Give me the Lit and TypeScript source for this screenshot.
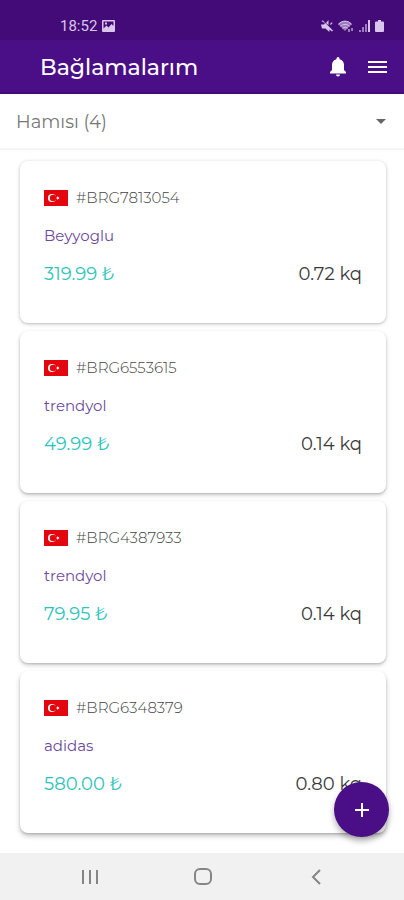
import { LitElement, html, css } from "lit";
import { customElement, property, state } from "lit/decorators.js";

interface Parcel {
  code: string;
  shop: string;
  price: string;
  weight: string;
}

const parcels: Parcel[] = [
  { code: "#BRG7813054", shop: "Beyyoglu", price: "319.99 ₺", weight: "0.72 kq" },
  { code: "#BRG6553615", shop: "trendyol", price: "49.99 ₺", weight: "0.14 kq" },
  { code: "#BRG4387933", shop: "trendyol", price: "79.95 ₺", weight: "0.14 kq" },
  { code: "#BRG6348379", shop: "adidas", price: "580.00 ₺", weight: "0.80 kq" },
];

@customElement("status-bar")
class StatusBar extends LitElement {
  static styles = css`
    :host {
      display: flex;
      justify-content: space-between;
      align-items: center;
      height: 40px;
      padding: 12px 20px 0 60px;
      box-sizing: border-box;
      background: #430b77;
      color: #d9c6ea;
      font: 15px/20px Roboto, sans-serif;
    }
    .group {
      display: flex;
      align-items: center;
      gap: 5px;
    }
    svg {
      display: block;
      fill: currentColor;
    }
    .dim {
      opacity: 0.6;
    }
  `;

  render() {
    return html`
      <div class="group">
        <span>18:52</span>
        <svg width="13" height="12" viewBox="0 0 13 12" aria-hidden="true">
          <path fill-rule="evenodd" d="M1 0h11a1 1 0 0 1 1 1v10a1 1 0 0 1-1 1H1a1 1 0 0 1-1-1V1a1 1 0 0 1 1-1zM1.500 1.500v7l3-3 2 2 3-3.500 2 2V1.500zM3 2.500h2v2H3z" />
        </svg>
      </div>
      <div class="group">
        <svg width="12" height="12" viewBox="0 0 12 12" aria-hidden="true">
          <path d="M0 4.500h3l1-1.500L.600 1.300l1-1L12 10.500l-1 1-2.600-2V12L4.500 8.500H1zM5 3l2.500-3v5zM9 4l1.800-1.800.8.800L9.800 5z" />
        </svg>
        <svg width="16" height="12" viewBox="0 0 16 12" aria-hidden="true">
          <path class="dim" d="M0 4C4-.500 10-.500 14 4L7 11z" />
          <path fill="none" stroke="currentColor" d="M.500 4.200c4-4 9-4 13 0M2.500 6.300c3-2.600 6-2.600 9 0M4.500 8.300c2-1.500 3-1.500 5 0" />
          <path class="dim" d="M10 9h2v3h-2zM13 8h2v3h-2z" />
        </svg>
        <svg width="11" height="12" viewBox="0 0 11 12" aria-hidden="true">
          <path class="dim" d="M0 10h2v2H0zM3 7h2v5H3zM6 4h2v8H6z" />
          <path d="M9 0h2v12H9z" />
        </svg>
        <svg width="9" height="12" viewBox="0 0 9 12" aria-hidden="true">
          <path d="M3 0h3v1.500h2a1 1 0 0 1 1 1V11a1 1 0 0 1-1 1H1a1 1 0 0 1-1-1V2.500a1 1 0 0 1 1-1h2z" />
        </svg>
      </div>
    `;
  }
}

@customElement("parcel-card")
class ParcelCard extends LitElement {
  @property({ attribute: false }) parcel!: Parcel;

  static styles = css`
    :host {
      display: flex;
      flex-direction: column;
      gap: 12px;
      padding: 24px 24px 36px;
      border-radius: 8px;
      background: #fff;
      line-height: 26px;
      box-shadow: 0 1px 4px rgba(0, 0, 0, 0.2), 0 1px 2px rgba(0, 0, 0, 0.1);
    }
    .row {
      display: flex;
      align-items: center;
      gap: 8px;
    }
    .between {
      justify-content: space-between;
    }
    .flag {
      display: block;
    }
    .code,
    .shop {
      font-size: 15px;
    }
    .code {
      font-weight: 300;
      color: #444;
    }
    .shop {
      color: #6d4a9c;
    }
    .price,
    .weight {
      font-size: 18px;
    }
    .price {
      color: #2cc4bb;
    }
    .weight {
      color: #3a3a3a;
    }
  `;

  render() {
    const p = this.parcel;
    return html`
      <div class="row">
        <svg class="flag" width="24" height="16" viewBox="0 0 24 16" role="img" aria-label="Türkiyə">
          <rect width="24" height="16" fill="#e3060f" />
          <circle cx="8" cy="8" r="4" fill="#fff" />
          <circle cx="9" cy="8" r="3.200" fill="#e3060f" />
          <path fill="#fff" d="M11.600 8l1.400-.5.1-1.500.9 1.200 1.500-.4-.9 1.200.9 1.200-1.500-.4-.9 1.200-.1-1.500z" />
        </svg>
        <span class="code">${p.code}</span>
      </div>
      <div class="row shop">${p.shop}</div>
      <div class="row between">
        <span class="price">${p.price}</span>
        <span class="weight">${p.weight}</span>
      </div>
    `;
  }
}

@customElement("app-root")
class AppRoot extends LitElement {
  @state() private items = parcels;

  static styles = css`
    :host {
      display: flex;
      flex-direction: column;
      min-height: 100vh;
      background: #fff;
      font-family: Montserrat, Inter, sans-serif;
    }
    button {
      display: grid;
      place-items: center;
      padding: 0;
      border: 0;
      background: none;
      color: inherit;
      cursor: pointer;
    }
    svg {
      display: block;
    }
    .bar {
      display: flex;
      align-items: center;
      height: 54px;
      padding: 2px 17px 0 40px;
      box-sizing: border-box;
      border-bottom: 2px solid #430b77;
      background: #4a0e87;
      color: #fff;
    }
    h1 {
      flex: 1;
      margin: 0;
      padding-top: 2px;
      font-size: 22px;
      line-height: 28px;
      font-weight: 500;
    }
    .actions {
      display: flex;
      gap: 21px;
    }
    .filter {
      display: grid;
      align-items: center;
      height: 56px;
      border-bottom: 2px solid #f5f5f5;
      box-sizing: border-box;
    }
    .filter > * {
      grid-area: 1 / 1;
    }
    .filter select {
      appearance: none;
      width: 100%;
      height: 100%;
      padding: 2px 40px 0 16px;
      border: 0;
      background: none;
      color: #777;
      font: 18px/24px Montserrat, Inter, sans-serif;
    }
    .filter svg {
      justify-self: end;
      margin-right: 18px;
      pointer-events: none;
    }
    main {
      flex: 1;
      position: relative;
      display: flex;
      flex-direction: column;
      gap: 8px;
      padding: 11px 18px 18px 20px;
    }
    parcel-card:nth-of-type(n + 2) {
      box-shadow: 0 2px 4px rgba(0, 0, 0, 0.22), 0 1px 2px rgba(0, 0, 0, 0.12);
    }
    parcel-card:nth-of-type(n + 4) {
      box-shadow: 0 3px 5px rgba(0, 0, 0, 0.24), 0 1px 2px rgba(0, 0, 0, 0.14);
    }
    .add {
      position: absolute;
      right: 15px;
      bottom: 16px;
      width: 55px;
      height: 55px;
      border-radius: 50%;
      background: #4a0e87;
      color: #fff;
      box-shadow: 0 4px 6px rgba(0, 0, 0, 0.3);
    }
    nav {
      display: flex;
      justify-content: center;
      gap: 89px;
      height: 47px;
      padding-left: 2px;
      background: #f1f1f1;
      color: #858585;
    }
    nav button {
      width: 24px;
    }
  `;

  render() {
    return html`
      <status-bar></status-bar>
      <header class="bar">
        <h1>Bağlamalarım</h1>
        <div class="actions">
          <button aria-label="Bildirişlər">
            <svg width="18" height="20" viewBox="0 0 18 20" fill="#fff">
              <path d="M7.500 1.500a1.500 1.500 0 0 1 3 0v.8c2.900.7 4.500 2.900 4.500 5.700v5l2 2v1.500H1V15l2-2V8c0-2.800 1.600-5 4.500-5.700zM7 17.500h4a2 2 0 0 1-4 0z" />
            </svg>
          </button>
          <button aria-label="Menyu">
            <svg width="19" height="14" viewBox="0 0 19 14" fill="#fff">
              <path d="M0 1h19v2H0zM0 6h19v2H0zM0 11h19v2H0z" />
            </svg>
          </button>
        </div>
      </header>
      <div class="filter">
        <select aria-label="Filtr">
          <option>Hamısı (${this.items.length})</option>
        </select>
        <svg width="10" height="5" viewBox="0 0 10 5" fill="#666" aria-hidden="true">
          <path d="M0 0h10L5 5z" />
        </svg>
      </div>
      <main>
        ${this.items.map((p) => html`<parcel-card .parcel=${p}></parcel-card>`)}
        <button class="add" aria-label="Əlavə et">
          <svg width="14" height="14" viewBox="0 0 14 14" fill="none" stroke="#fff" stroke-width="2">
            <path d="M7 0v14M0 7h14" />
          </svg>
        </button>
      </main>
      <nav aria-label="Sistem">
        <button aria-label="Son tətbiqlər">
          <svg width="16" height="16" viewBox="0 0 16 16" fill="none" stroke="currentColor" stroke-width="2">
            <path d="M1 1v14M8 1v14M15 1v14" />
          </svg>
        </button>
        <button aria-label="Əsas ekran">
          <svg width="18" height="18" viewBox="0 0 18 18" fill="none" stroke="currentColor" stroke-width="2">
            <rect x="1" y="1" width="16" height="15" rx="5" />
          </svg>
        </button>
        <button aria-label="Geri">
          <svg width="10" height="16" viewBox="0 0 10 16" fill="none" stroke="currentColor" stroke-width="2">
            <path d="M9 1L2 8l7 7" />
          </svg>
        </button>
      </nav>
    `;
  }
}
